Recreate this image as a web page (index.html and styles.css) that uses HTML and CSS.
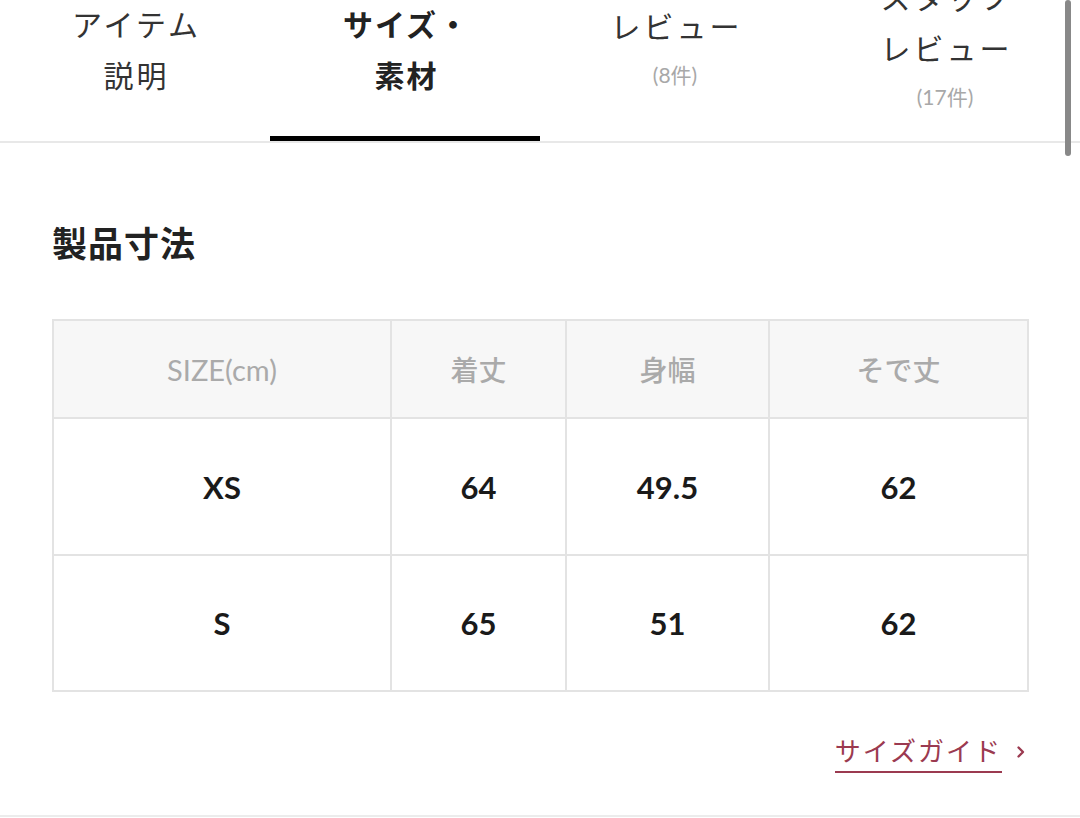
FILE: index.html
```html
<!DOCTYPE html>
<html lang="ja">
<head>
<meta charset="utf-8">
<title>サイズ・素材</title>
<link rel="stylesheet" href="styles.css">
</head>
<body>
<div class="page">
  <nav class="tabs">
    <div class="tab">
      <span class="tab-label">アイテム<br>説明</span>
    </div>
    <div class="tab tab-active">
      <span class="tab-label">サイズ・<br>素材</span>
    </div>
    <div class="tab">
      <span class="tab-label">レビュー</span>
      <span class="tab-count">(8件)</span>
    </div>
    <div class="tab tab-tall">
      <span class="tab-label">スタッフ<br>レビュー</span>
      <span class="tab-count">(17件)</span>
    </div>
  </nav>
  <div class="scrollbar"></div>

  <section class="content">
    <h2 class="heading">製品寸法</h2>
    <table class="size-table">
      <colgroup>
        <col class="c1"><col class="c2"><col class="c3"><col class="c4">
      </colgroup>
      <thead>
        <tr>
          <th class="latin">SIZE(cm)</th>
          <th>着丈</th>
          <th>身幅</th>
          <th>そで丈</th>
        </tr>
      </thead>
      <tbody>
        <tr class="row-a">
          <td>XS</td><td>64</td><td>49.5</td><td>62</td>
        </tr>
        <tr class="row-b">
          <td>S</td><td>65</td><td>51</td><td>62</td>
        </tr>
      </tbody>
    </table>
    <div class="guide-row">
      <a class="guide-link" href="#"><span class="guide-text">サイズガイド</span><svg class="chev" width="10" height="14" viewBox="0 0 10 14"><path d="M2.5 2.5 L7 7 L2.5 11.5" fill="none" stroke="#9b3a50" stroke-width="2.4" stroke-linecap="round" stroke-linejoin="round"/></svg></a>
    </div>
  </section>
  <div class="bottom-line"></div>
</div>
</body>
</html>
```

FILE: styles.css
```css
html, body {
  margin: 0;
  padding: 0;
  background: #ffffff;
}
body {
  width: 1080px;
  height: 818px;
  overflow: hidden;
  font-family: "Noto Sans CJK JP", "Noto Sans", sans-serif;
  color: #222;
}
.page {
  position: relative;
  width: 1080px;
  height: 818px;
  display: flex;
  flex-direction: column;
}
.tabs {
  display: grid;
  grid-template-columns: 270px 270px 270px 270px;
  height: 141px;
  border-bottom: 2px solid #e8e8e8;
}
.tab {
  box-sizing: border-box;
  height: 141px;
  padding-bottom: 38px;
  border-bottom: 5px solid transparent;
  display: flex;
  flex-direction: column;
  align-items: center;
  justify-content: center;
  text-align: center;
  overflow: visible;
}
.tab-tall {
  padding-bottom: 44px;
}
.tab-label {
  font-size: 30px;
  line-height: 51px;
  color: #333;
  letter-spacing: 3px;
  padding-left: 3px;
}
.tab-active {
  border-bottom-color: #000;
}
.tab-active .tab-label {
  font-weight: 700;
  color: #222;
  letter-spacing: 2px;
}
.tab-count {
  font-family: "Lato", "Noto Sans CJK JP", sans-serif;
  font-size: 21px;
  line-height: 48px;
  color: #a8a8a8;
}
.scrollbar {
  position: absolute;
  left: 1065px;
  top: 0;
  width: 6px;
  height: 156px;
  background: #888;
  border-radius: 3px;
}
.content {
  padding: 0 52px 0 52px;
  display: flex;
  flex-direction: column;
}
.heading {
  margin: 74px 0 0 0;
  font-size: 35px;
  line-height: 50px;
  font-weight: 700;
  color: #222;
  letter-spacing: 1px;
}
.size-table {
  margin-top: 52px;
  width: 975px;
  border-collapse: collapse;
  table-layout: fixed;
  border: 2px solid #e3e3e3;
}
.c1 { width: 338px; }
.c2 { width: 175px; }
.c3 { width: 203px; }
.c4 { width: 259px; }
.size-table th,
.size-table td {
  border: 2px solid #e3e3e3;
  text-align: center;
  vertical-align: middle;
  padding: 0;
}
.size-table th {
  height: 96px;
  background: #f7f7f7;
  color: #aaa;
  font-size: 28px;
  font-weight: 500;
}
.size-table th.latin {
  font-family: "Lato", sans-serif;
  font-weight: 400;
  font-size: 29px;
}
.size-table td {
  font-family: "Lato", sans-serif;
  font-weight: 700;
  font-size: 31px;
  color: #1a1a1a;
}
.row-a td { height: 135px; }
.row-b td { height: 134px; }
.guide-row {
  display: flex;
  justify-content: flex-end;
  margin-top: 40px;
  padding-right: 2px;
}
.guide-link {
  display: flex;
  align-items: center;
  text-decoration: none;
  color: #9b3a50;
  font-size: 26px;
  line-height: 40px;
}
.guide-text {
  letter-spacing: 2px;
  border-bottom: 2px solid #9b3a50;
  line-height: 36px;
  padding-bottom: 3px;
}
.chev {
  margin-left: 14px;
  margin-bottom: 2px;
  display: block;
}
.bottom-line {
  margin-top: auto;
  height: 2px;
  background: #ececec;
  margin-bottom: 1px;
}
```
